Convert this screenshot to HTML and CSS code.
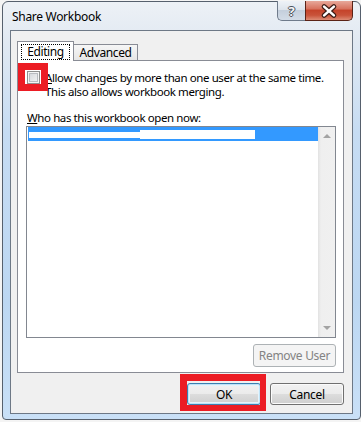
FILE: index.html
```html
<!DOCTYPE html>
<html lang="en">
<head>
  <meta charset="UTF-8">
  <title>Share Workbook</title>
  <link rel="stylesheet" href="styles.css">
</head>
<body>

<div class="window">
  <div class="titlebar">
    <span class="title">Share Workbook</span>
    <div class="caption-buttons">
      <span class="cap-btn help">?</span>
      <span class="cap-btn close">
        <svg width="47" height="20" viewBox="0 0 47 20">
          <path d="M18.5 5.5 L28.5 14.5 M28.5 5.5 L18.5 14.5" stroke="#3b1c16" stroke-width="5" stroke-linecap="round" fill="none"/>
          <path d="M18.5 5.5 L28.5 14.5 M28.5 5.5 L18.5 14.5" stroke="#ffffff" stroke-width="2.6" stroke-linecap="round" fill="none"/>
        </svg>
      </span>
    </div>
  </div>

  <div class="client">
    <div class="tabs">
      <div class="tab active"><span class="focus">Editing</span></div>
      <div class="tab">Advanced</div>
    </div>

    <div class="panel">
      <div class="check-row">
        <span class="check-wrap">
          <span class="checkbox"></span>
          <span class="mark-box check-mark"></span>
        </span>
        <div class="check-label">
          <span class="line"><u>A</u>llow changes by more than one user at the same time.</span>
          <span class="line">This also allows workbook merging.</span>
        </div>
      </div>

      <div class="list-label"><u>W</u>ho has this workbook open now:</div>

      <div class="listbox">
        <div class="list-items">
          <div class="list-row selected">
            <span class="redact short"></span>
            <span class="redact tall"></span>
          </div>
        </div>
        <div class="scrollbar">
          <span class="arrow up"></span>
          <span class="arrow down"></span>
        </div>
      </div>

      <div class="panel-actions">
        <button class="btn" disabled><u>R</u>emove User</button>
      </div>
    </div>

    <div class="dialog-actions">
      <span class="btn-wrap">
        <button class="btn default">OK</button>
        <span class="mark-box ok-mark"></span>
      </span>
      <button class="btn">Cancel</button>
    </div>
  </div>
</div>

</body>
</html>
```

FILE: styles.css
```css
* {
  box-sizing: border-box;
  margin: 0;
  padding: 0;
}

body {
  background: #f4f4f4;
  font-family: 'Noto Sans', 'Open Sans', sans-serif;
  font-size: 11.5px;
  letter-spacing: -0.4px;
  color: #000;
}

u {
  text-decoration: underline;
  text-underline-offset: 1px;
}

.window {
  width: 359px;
  height: 419px;
  margin: 1px 0 0 2px;
  border: 1px solid #56606d;
  border-radius: 6px 6px 4px 4px;
  background: linear-gradient(to bottom, #edf1f6 0, #e1e9f2 40px, #c6dcf3 130px, #bcd7f2 300px, #c9e0f7 100%);
  padding: 0 7px 5px 7px;
  display: flex;
  flex-direction: column;
}

/* title bar */
.titlebar {
  height: 28px;
  display: flex;
  align-items: flex-start;
}

.title {
  margin: 8px 0 0 2px;
  line-height: 14px;
  font-size: 12px;
  letter-spacing: -0.3px;
}

.caption-buttons {
  margin-left: auto;
  margin-top: -1px;
  display: flex;
}

.cap-btn {
  height: 20px;
  display: flex;
  align-items: center;
  justify-content: center;
  border: 1px solid #6f7b8b;
  border-top: none;
}

.help {
  width: 28px;
  border-right: none;
  border-radius: 0 0 0 5px;
  background: linear-gradient(to bottom, #eef2f7 0%, #dde4ec 45%, #c4cfdc 50%, #d3dce7 100%);
  color: #f4f6f8;
  font-weight: bold;
  font-size: 13px;
  letter-spacing: 0;
  text-shadow: 1px 0 #4a525c, -1px 0 #4a525c, 0 1px #4a525c, 0 -1px #4a525c;
}

.close {
  width: 48px;
  border-color: #5a2216;
  border-radius: 0 0 5px 0;
  background: linear-gradient(to bottom, #e7a89a 0%, #d87460 40%, #c5442b 50%, #c9533a 75%, #dd8c75 100%);
}

/* client area */
.client {
  height: 384px;
  border: 1px solid #6d7886;
  background: #f0f0f0;
  padding: 10px 8px 8px 6px;
  display: flex;
  flex-direction: column;
}

.tabs {
  height: 19px;
  display: flex;
  align-items: flex-end;
  position: relative;
  z-index: 1;
}

.tab {
  width: 65px;
  height: 16px;
  margin-left: -1px;
  border: 1px solid #898c95;
  border-bottom: none;
  background: linear-gradient(to bottom, #f6f6f6, #e6e6e6);
  display: flex;
  align-items: center;
  justify-content: center;
  line-height: 14px;
  font-size: 12px;
}

.tab.active {
  width: 57px;
  height: 20px;
  margin-left: 0;
  margin-bottom: -1px;
  background: #fff;
  justify-content: flex-start;
  padding-left: 3px;
}

.focus {
  width: 49px;
  height: 16px;
  border: 1px dotted #000;
  text-align: center;
  line-height: 14px;
}

.panel {
  height: 313px;
  border: 1px solid #898c95;
  background: #fff;
  padding: 0 7px 5px 8px;
  display: flex;
  flex-direction: column;
}

.check-row {
  margin-top: 10px;
  display: flex;
  align-items: flex-start;
}

.check-wrap {
  position: relative;
  width: 13px;
  height: 13px;
  margin-left: 1px;
  flex-shrink: 0;
}

.checkbox {
  display: block;
  width: 13px;
  height: 13px;
  border: 1px solid #8e8f8f;
  background: linear-gradient(135deg, #d0d3d8, #f7f7f7);
  box-shadow: inset 0 0 0 1px #f4f4f4, inset 0 0 0 2px #b9bcc1;
}

.check-label {
  margin-left: 5px;
  white-space: nowrap;
  position: relative;
  z-index: 0;
}

.check-label .line {
  display: block;
  height: 14px;
  line-height: 14px;
}

.mark-box {
  position: absolute;
  border: 7px solid #ec1c24;
  z-index: 2;
}

.check-mark {
  left: -9px;
  top: -8px;
  width: 30px;
  height: 28px;
}

.list-label {
  margin-top: 12px;
  padding-left: 1px;
  line-height: 14px;
}

.listbox {
  margin-top: 1px;
  height: 212px;
  border: 1px solid #828790;
  display: flex;
}

.list-items {
  flex: 1;
  padding-left: 1px;
}

.list-row {
  height: 14px;
  position: relative;
}

.selected {
  background: #3399ff;
  display: flex;
  align-items: center;
  padding-left: 1px;
}

.redact {
  background: #fff;
}

.redact.short {
  width: 111px;
  height: 6px;
  margin-top: 2px;
}

.redact.tall {
  width: 115px;
  height: 9px;
}

.scrollbar {
  width: 17px;
  background: linear-gradient(to right, #e2e2e2, #efefef 3px, #f0f0f0);
  display: flex;
  flex-direction: column;
  justify-content: space-between;
  align-items: center;
  padding: 7px 0 7px;
}

.arrow {
  width: 0;
  height: 0;
  border-left: 4px solid transparent;
  border-right: 4px solid transparent;
}

.arrow.up {
  border-bottom: 4px solid #a3a3a3;
}

.arrow.down {
  border-top: 4px solid #a3a3a3;
}

.panel-actions {
  margin-top: 6px;
  display: flex;
  justify-content: flex-end;
}

.btn {
  font-family: inherit;
  font-size: 12px;
  letter-spacing: -0.3px;
  color: #000;
  width: 74px;
  height: 22px;
  border: 1px solid #707070;
  border-radius: 3px;
  background: linear-gradient(to bottom, #f2f2f2 0%, #ebebeb 50%, #dddddd 51%, #cfcfcf 100%);
  box-shadow: inset 0 0 0 1px #fbfbfb;
}

.btn:disabled {
  width: 83px;
  height: 23px;
  color: #838383;
  border-color: #adb2b5;
  background: #f4f4f4;
  box-shadow: none;
}

.btn:disabled u {
  text-decoration: none;
}

.btn.default {
  border-color: #3c7fb1;
  box-shadow: inset 0 0 0 1px #bfe3f7, inset 0 0 0 2px #e5f3fb;
}

.dialog-actions {
  margin-top: 10px;
  display: flex;
  justify-content: flex-end;
  gap: 9px;
}

.btn-wrap {
  position: relative;
  display: flex;
}

.ok-mark {
  left: -7px;
  top: -9px;
  width: 86px;
  height: 37px;
  border-width: 7px 6px 6px 7px;
}
```
